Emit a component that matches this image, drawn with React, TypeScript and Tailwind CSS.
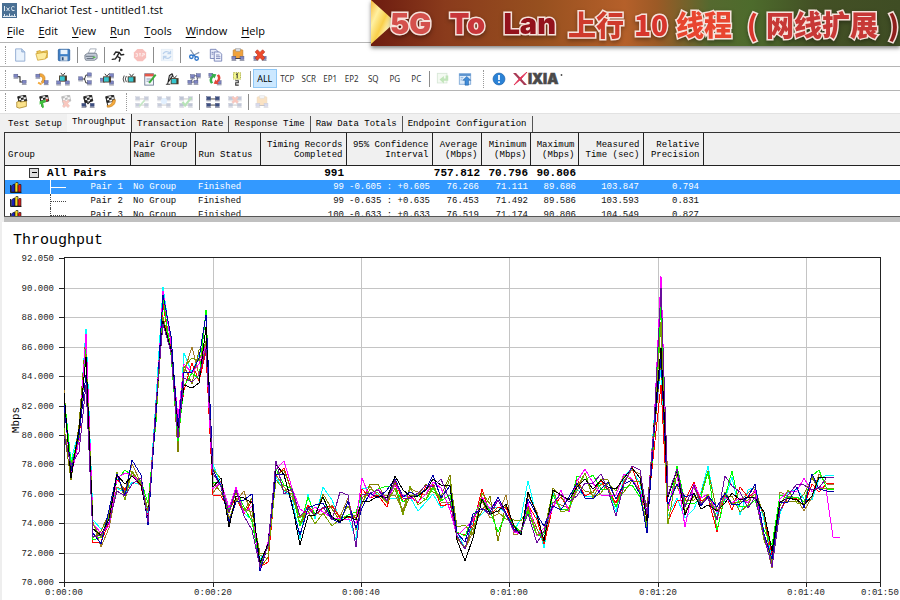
import React from "react";
import type { ReactNode } from "react";

/* ---------- icon drawing parts (16 x 16 grid) ---------- */

function Node({ x, y, dark }: { x: number; y: number; dark?: boolean }) {
  return (
    <g>
      <rect x={x} y={y} width="4.5" height="3.6" fill={dark ? "#3c4f80" : "#7f86c4"} stroke="#4c5480" strokeWidth="0.5" />
      <rect x={x - 0.4} y={y + 4} width="5.4" height="1.2" fill="#8f93a5" />
    </g>
  );
}

function Tv({ x, y }: { x: number; y: number }) {
  return (
    <g>
      <path d={`M${x + 2} ${y - 3}l2.4 3 2.4-3`} stroke="#222" fill="none" strokeWidth="1" />
      <rect x={x} y={y} width="9" height="7" fill="#4a3a28" />
      <rect x={x + 1} y={y + 1} width="5.5" height="5" fill="#37c6cf" />
    </g>
  );
}

function Flag() {
  return (
    <g transform="rotate(-12 8 5)">
      <rect x="4" y="1" width="9" height="7" fill="#f5f5f5" stroke="#222" strokeWidth="0.8" />
      <path d="M4 1h3v2.3H4zM10 1h3v2.3h-3zM7 3.3h3v2.3H7zM4 5.6h3V8H4zM10 5.6h3V8h-3z" fill="#222" />
      <path d="M4 1v12" stroke="#222" strokeWidth="1" />
    </g>
  );
}

const fourNodes = (
  <g>
    <path d="M4 4.5h8M4 11.5h8" stroke="#333" />
    <Node x={0.8} y={2} dark />
    <Node x={10.7} y={2} dark />
    <Node x={0.8} y={9.5} dark />
    <Node x={10.7} y={9.5} dark />
  </g>
);

const redCross = <path d="M2.5 4.5L5 2l3 3 3-3 2.500 2.500-3 3.300 3 3.400L11 14l-3-3-3 3-2.500-2.500 3-3.500z" fill="#ef4a2c" stroke="#a92a18" strokeWidth="0.7" />;

const clipboard = (
  <g>
    <rect x="2.500" y="2" width="11" height="10" rx="1" fill="#f0a23c" stroke="#b87520" strokeWidth="0.7" />
    <rect x="5.500" y="0.800" width="5" height="3" fill="#d9dce2" stroke="#888" strokeWidth="0.5" />
    <Node x={1} y={9.5} />
    <Node x={10.3} y={9.5} />
    <path d="M5 12h6" stroke="#334" />
  </g>
);

const icons: Record<string, ReactNode> = {
  "New": (
    <g>
      <path d="M3 1h7l3.500 3.500V15H3z" fill="#eaf3fd" stroke="#8ba7cf" />
      <path d="M10 1v3.500h3.500" fill="#bcd3ee" stroke="#8ba7cf" />
    </g>
  ),
  "Open": (
    <g>
      <path d="M2 4l4-1 1 1.500 7-1.500v8l-9 2z" fill="#f2d264" stroke="#c99a25" />
      <path d="M1 6.500l9-1.500 4 .5-2 7-9 1.500z" fill="#fdeb9d" stroke="#c99a25" strokeWidth="0.8" />
    </g>
  ),
  "Save": (
    <g>
      <rect x="1.500" y="1.500" width="13" height="13" rx="1" fill="#3f7fc6" stroke="#2a5f9c" />
      <rect x="4" y="2" width="8" height="5" fill="#e8f1fb" />
      <rect x="4" y="9.500" width="8" height="5" fill="#d4dce6" />
      <rect x="5.500" y="10.500" width="2" height="3.500" fill="#2a4f80" />
    </g>
  ),
  "Print": (
    <g>
      <path d="M5 6l2-5h7l-2 5z" fill="#fff" stroke="#8892a0" strokeWidth="0.8" />
      <path d="M1 8l3-2h10l1 2v4l-3 2H2l-1-2z" fill="#c3cad6" stroke="#5e6878" strokeWidth="0.8" />
      <path d="M2 9.500h10M3 12h8" stroke="#5e6878" />
      <rect x="10" y="10" width="3" height="1.500" fill="#58c04a" />
    </g>
  ),
  "Run": (
    <g fill="none" stroke="#262626" strokeWidth="1.600" strokeLinecap="round">
      <circle cx="11.800" cy="2.300" r="1.500" fill="#262626" stroke="none" />
      <path d="M9.500 5L7 9.500l3.500 2-1 3.500M7 9.500L5 12.500 1.500 13M9.500 5L5.500 4.500 3.500 7.500M9.500 5l2 3 3-.5" />
    </g>
  ),
  "Stop": (
    <g opacity="0.38">
      <path d="M5 1h6l4 4v6l-4 4H5l-4-4V5z" fill="#ee5a50" />
      <path d="M3 6.500h2v3H3M7 6.500h2M8 6.500v3M10.500 6.500h2.500v1.500h-2.500v2" stroke="#fff" fill="none" strokeWidth="0.8" />
    </g>
  ),
  "Refresh": (
    <g opacity="0.35">
      <rect x="1.500" y="1.500" width="13" height="13" fill="#d7e6f6" stroke="#b4cdea" />
      <path d="M3.500 7c1-3 5-4 8-1M12 3v3.500H8.500M12.500 9c-1 3-5 4-8 1M4 13V9.500h3.500" stroke="#3e7fca" fill="none" strokeWidth="1.500" />
    </g>
  ),
  "Cut": (
    <g fill="none">
      <path d="M8 8L4 2M8 8l6-3" stroke="#8796ad" strokeWidth="1.500" />
      <circle cx="5" cy="10" r="2" stroke="#2c74c9" strokeWidth="1.500" />
      <circle cx="11" cy="12" r="2" stroke="#2c74c9" strokeWidth="1.500" />
      <path d="M8 8l-2 1M8 8l2 2.500" stroke="#2c74c9" strokeWidth="1.500" />
    </g>
  ),
  "Copy": (
    <g stroke="#6674ad" strokeWidth="0.9">
      <path d="M1.500 1.500H8L10 4v8H1.500z" fill="#e6eaf8" />
      <path d="M6 4.500h6L14.500 7v8H6z" fill="#f0f3fd" />
      <path d="M8 8h4M8 10h5M8 12h5M3 5h2M3 7h2" />
    </g>
  ),
  "Paste": clipboard,
  "Delete": (
    <g>
      <Node x={1} y={9.5} />
      <Node x={10.5} y={9.5} />
      {redCross}
    </g>
  ),
  "Add pair": (
    <g>
      <path d="M4 5.500h4v6h4" stroke="#222" fill="none" strokeWidth="1.200" />
      <Node x={1} y={2.500} />
      <Node x={10.5} y={9.5} />
    </g>
  ),
  "Add VoIP pair": (
    <g>
      <path d="M5 2c6-1 9 6 4 11l-2-1.500C10 8 9 5 5 5z" fill="#f4a93c" stroke="#b87418" strokeWidth="0.6" />
      <Node x={1} y={2.500} />
      <Node x={10.5} y={9.8} />
      <path d="M4 11l4 2-1 2-4-2z" fill="#f4a93c" />
    </g>
  ),
  "Add video pair": (
    <g>
      <Tv x={3.500} y={4} />
      <Node x={0.8} y={10.2} />
      <Node x={10.700} y={10.2} />
    </g>
  ),
  "Add multicast group": (
    <g>
      <path d="M4 8h4M13 3.500H9L7.500 8 9 12.500h4" stroke="#222" fill="none" />
      <Node x={0.8} y={5.500} />
      <Node x={10.7} y={1} />
      <Node x={10.7} y={10} />
    </g>
  ),
  "Add video multicast": (
    <g>
      <Node x={0.5} y={7} />
      <Node x={11} y={2} />
      <Node x={11} y={10.2} />
      <Tv x={3.500} y={5} />
    </g>
  ),
  "Add IPTV": (
    <g>
      <path d="M2.500 4q-2.500 4 0 8M5 4.500q-2.500 3.500 0 7" stroke="#333" fill="none" />
      <Tv x={6.500} y={5} />
    </g>
  ),
  "Edit pair": (
    <g>
      <rect x="2" y="2" width="10" height="13" fill="#f3f6fb" stroke="#6c7a92" />
      <rect x="2" y="2" width="10" height="3" fill="#e4584a" />
      <path d="M4 8h5M4 10.500h4" stroke="#7d8dad" />
      <path d="M14.500 3L7 12.500" stroke="#3cae3b" strokeWidth="2.200" />
    </g>
  ),
  "Edit video": (
    <g>
      <path d="M3 14L5 4l3-2 1 2-5 7" stroke="#222" fill="#ccc" strokeWidth="1.200" />
      <Tv x={6.500} y={7} />
      <path d="M1 14h5" stroke="#222" />
    </g>
  ),
  "Replicate": (
    <g>
      <path d="M5 5l7-1M3 12l7-1M7 5l-2 6M13 4l-2 7" stroke="#445" />
      <Node x={4} y={3} />
      <Node x={10.7} y={2} />
      <Node x={1} y={9.5} />
      <Node x={8} y={9.5} />
    </g>
  ),
  "Swap endpoints": (
    <g>
      <Node x={1} y={1.500} />
      <Node x={10.5} y={10} />
      <path d="M3.500 13.500A6 6 0 0 1 5 4L3.500 2l6 .5-2 5-1-1.800A4 4 0 0 0 6 12z" fill="#35b24a" />
      <path d="M12.500 2.500A6 6 0 0 1 11 12l1.500 2-6-.5 2-5 1 1.800A4 4 0 0 0 10 4z" fill="#e2473b" />
    </g>
  ),
  "Renumber": (
    <g fill="none">
      <rect x="4" y="0.800" width="8" height="7.400" fill="#f4f78e" stroke="#a3a832" strokeDasharray="1.500 1" />
      <path d="M7 3l1.200-1v5M6 10h3.500v2.300H6.500V15H10" stroke="#333" strokeWidth="1.200" />
    </g>
  ),
  "Import": (
    <g opacity="0.4">
      <rect x="1.500" y="1.500" width="11" height="11" fill="#e6f3e0" stroke="#9cc49c" />
      <path d="M14 4v6H9v3L4 8.500 9 4.500v3h2V4z" fill="#66bf54" />
    </g>
  ),
  "Export": (
    <g>
      <rect x="1.500" y="2" width="13" height="12" fill="#dcebfa" stroke="#7fa9d8" />
      <rect x="1.500" y="2" width="13" height="2.500" fill="#5d94cf" />
      <path d="M3 6.500h3M3 9h2" stroke="#7fa9d8" />
      <path d="M8 15V9.500H5.500l4.500-4.500 4.500 4.500H12V15z" fill="#3f8bd8" stroke="#215e9f" strokeWidth="0.6" />
    </g>
  ),
  "About": (
    <g>
      <circle cx="8" cy="8" r="6.800" fill="#2a82d6" stroke="#1d62aa" strokeWidth="0.8" />
      <path d="M8 3.500v5.500M8 10.700v2" stroke="#fff" strokeWidth="2" />
    </g>
  ),
  "Open run": (
    <g>
      <Flag />
      <path d="M2 8l3-1 1 1 7-1v6l-8 2-3-1z" fill="#fbe28a" stroke="#a8842a" strokeWidth="0.9" />
    </g>
  ),
  "Start group": (
    <g>
      <Flag />
      <path d="M3 7l7-2v3l-3 1 1 5-2 1-1.500-5L3 11z" fill="#3fbf3c" />
      <path d="M10 4l3 1-2 3z" fill="#e04030" />
    </g>
  ),
  "Remove group": (
    <g opacity="0.3">
      <Flag />
      <g transform="translate(2 4) scale(.75)">{redCross}</g>
    </g>
  ),
  "Group endpoints": (
    <g>
      <Flag />
      <Node x={1} y={9.5} dark />
      <Node x={10.500} y={9.500} dark />
      <path d="M3 4l5 6 5-5" stroke="#222" fill="none" strokeWidth="1.300" />
    </g>
  ),
  "Group voice": (
    <g>
      <Flag />
      <path d="M14 5c1 5-3 9-9 9l-.5-2c4 0 6-2 6.500-6z" fill="#f4a93c" stroke="#b87418" strokeWidth="0.6" />
    </g>
  ),
  "Enable link": <g opacity="0.28">{fourNodes}<path d="M5 13l6-7" stroke="#3a3" strokeWidth="2" /></g>,
  "Find link": <g opacity="0.28">{fourNodes}<circle cx="8" cy="7" r="3.500" fill="#9cf" /></g>,
  "Check link": <g opacity="0.32">{fourNodes}<path d="M4 8l3 4 7-9" stroke="#2a2" strokeWidth="2.500" fill="none" /></g>,
  "Link all": fourNodes,
  "Unlink all": <g opacity="0.3">{fourNodes}<g transform="translate(2.500 0) scale(.7)">{redCross}</g></g>,
  "Paste link": <g opacity="0.3">{clipboard}</g>,
};

function ToolButton({ name, grow }: { name: string; grow?: boolean }) {
  return (
    <button type="button" aria-label={name} className={`flex h-5 items-center justify-center ${grow ? "min-w-0 flex-1" : "w-[22px] shrink-0"}`}>
      <svg viewBox="0 0 16 16" className="size-[14px]" aria-hidden="true">{icons[name]}</svg>
    </button>
  );
}

const Separator = () => <span className="mx-[2px] h-4 w-px shrink-0 bg-[#8c8c8c]" />;
const Grip = () => <span className="h-[18px] w-0 shrink-0 border-l border-dotted border-[#999]" />;

const filters = ["ALL", "TCP", "SCR", "EP1", "EP2", "SQ", "PG", "PC"];
const menus = ["File", "Edit", "View", "Run", "Tools", "Window", "Help"];
const tabs = ["Test Setup", "Throughput", "Transaction Rate", "Response Time", "Raw Data Totals", "Endpoint Configuration"];

function TitleIcon() {
  return (
    <svg viewBox="0 0 15 15" className="size-[15px]" aria-hidden="true">
      <rect width="15" height="15" fill="#4a7094" />
      <path d="M2.500 3v5M4.500 4.500l3 3.500M7.500 4.500l-3 3.500M12.500 4q-3-1.500-3 1.500t3 2" stroke="#dfe9f2" fill="none" />
      <path d="M1 13.500h13M2.500 11v2M5 12v1M7.500 10.500v2.500M10 12v1M12.500 11v2" stroke="#dfe9f2" />
    </svg>
  );
}

function IxiaLogo() {
  return (
    <svg viewBox="0 0 50 14" className="ml-[3px] h-[14px] w-[50px]" role="img" aria-label="IXIA">
      <path d="M0 1h3l11 12h-3z" fill="#a83a55" />
      <path d="M14 0L8 7 1 13l6-7z" fill="#e2365a" stroke="#e2365a" />
      <text x="15" y="12" fontFamily="Inter, sans-serif" fontWeight="900" fontSize="14" fill="#4a4a4a" stroke="#4a4a4a" strokeWidth="0.6">IXIA</text>
      <circle cx="48.500" cy="3" r="0.900" fill="#4a4a4a" />
    </svg>
  );
}

function Banner() {
  return (
    <div className="absolute top-0 right-0 flex h-[46px] w-[529px] items-center overflow-hidden bg-[linear-gradient(90deg,#6d1c10_0%,#8a3b1c_14%,#97501f_32%,#b5602a_48%,#9c5a26_54%,#55692f_64%,#4d6b2c_72%,#435025_84%,#3f4d24_100%)] pt-[2px] pl-[19px] shadow-[0_2px_4px_rgba(0,0,0,0.5)]">
      <svg viewBox="0 0 20 46" className="absolute top-0 left-0 h-[46px] w-5" aria-hidden="true">
        <defs>
          <linearGradient id="gold" x1="0" y1="0" x2="1" y2="1">
            <stop offset="0" stopColor="#f8b93a" />
            <stop offset="0.300" stopColor="#fff0a0" />
            <stop offset="0.550" stopColor="#f9cf4a" />
            <stop offset="0.750" stopColor="#fff3b8" />
            <stop offset="1" stopColor="#eda52c" />
          </linearGradient>
        </defs>
        <path d="M0 0l20 18v8L0 44z" fill="url(#gold)" />
      </svg>
      <p className="relative flex items-center font-['Noto_Sans_CJK_SC',sans-serif] text-[28px] leading-[44px] font-black whitespace-nowrap text-[#d8352c] drop-shadow-[0_2px_2px_rgba(0,0,0,0.35)] [-webkit-text-stroke:3px_#f6e2dc] [paint-order:stroke_fill]">
        <span className="flex w-[178px] justify-between pr-3 font-['Inter',sans-serif] text-[29px]">
          <span className="text-[#d4504c]">5G</span>
          <span className="text-[#c8363a]">To</span>
          <span className="text-[#93121c]">Lan</span>
        </span>
        <span className="w-[66px] text-[#cf3a2c]">上行</span>
        <span className="w-[42px]">10</span>
        <span className="w-[61px] text-[#e8452f]">线程</span>
        <span className="w-[21px] text-right">(</span>
        <span className="ml-2 w-[122px] text-[#c73836]">网线扩展</span>
        <span className="text-[#8f1f1c]">)</span>
      </p>
    </div>
  );
}

/* ---------- results table ---------- */

const columns = [
  { label: ["Group"], width: "w-[125px]", left: true },
  { label: ["Pair Group", "Name"], width: "w-[65px]", left: true },
  { label: ["Run Status"], width: "w-[65px]", left: true },
  { label: ["Timing Records", "Completed"], width: "w-[86px]" },
  { label: ["95% Confidence", "Interval"], width: "w-[86px]" },
  { label: ["Average", "(Mbps)"], width: "w-[49px]" },
  { label: ["Minimum", "(Mbps)"], width: "w-[49px]" },
  { label: ["Maximum", "(Mbps)"], width: "w-[48px]" },
  { label: ["Measured", "Time (sec)"], width: "w-[65px]" },
  { label: ["Relative", "Precision"], width: "w-[60px]" },
];

const pairs = [
  ["Pair 1", "No Group", "Finished", "99", "-0.605 : +0.605", "76.266", "71.111", "89.686", "103.847", "0.794"],
  ["Pair 2", "No Group", "Finished", "99", "-0.635 : +0.635", "76.453", "71.492", "89.586", "103.593", "0.831"],
  ["Pair 3", "No Group", "Finished", "100", "-0.633 : +0.633", "76.519", "71.174", "90.806", "104.549", "0.827"],
];

function PairIcon() {
  return (
    <svg viewBox="0 0 12 11" className="h-[11px] w-3" aria-hidden="true">
      <path d="M.5 3v7.500h11" stroke="#222" fill="none" />
      <path d="M1.500 4l1.500-1.500h2V10H1.500z" fill="#1c22b8" stroke="#111" strokeWidth="0.6" />
      <path d="M5 1.500L6 .5h2V10H5z" fill="#f6d91e" stroke="#111" strokeWidth="0.6" />
      <path d="M8 3.500l1-1h2V10H8z" fill="#d81e1e" stroke="#111" strokeWidth="0.6" />
    </svg>
  );
}

function ResultsTable() {
  return (
    <div className="ml-1 h-[84px] overflow-hidden border-t border-l border-[#333] bg-white">
      <table className="w-full table-fixed border-collapse text-[9px] leading-[10px] whitespace-nowrap">
        <colgroup>
          {columns.map((c) => <col key={c.label[0]} className={c.width} />)}
          <col />
        </colgroup>
        <thead>
          <tr className="h-8 bg-[#f0f0f0]">
            {columns.map((c) => (
              <th key={c.label[0]} scope="col" className={`border-r border-b border-[#222] px-[3px] pb-[5px] align-bottom font-normal ${c.left ? "text-left" : "text-right"}`}>
                {c.label.map((line) => <span key={line} className="block">{line}</span>)}
              </th>
            ))}
            <td className="border-b border-[#222]" />
          </tr>
        </thead>
        <tbody>
          <tr className="h-[15px] text-[11px] font-bold">
            <td>
              <div className="flex items-center pl-6">
                <button type="button" aria-label="Collapse all pairs" className="mr-2 flex size-[10px] items-center justify-center border border-[#333] bg-[#ddd]">
                  <span className="h-px w-[5px] bg-black" />
                </button>
                All Pairs
              </div>
            </td>
            <td /><td />
            <td className="pr-[2px] text-right">991</td>
            <td />
            <td className="pr-px text-right">757.812</td>
            <td className="pr-[2px] text-right">70.796</td>
            <td className="pr-[2px] text-right">90.806</td>
            <td /><td /><td />
          </tr>
          {pairs.map((row, i) => (
            <tr key={row[0]} className={i === 0 ? "h-[14px] bg-[#3399ff] text-white" : "h-[14px] text-[#111]"}>
              {row.map((cell, j) => (
                <td key={j} className={j === 0 ? "pr-[7px]" : j < 3 ? "pl-[3px]" : j < 8 ? "pr-[2px] text-right" : "pr-[4px] text-right"}>
                  {j === 0 ? (
                    <div className="flex h-[14px] items-center pl-[5px]">
                      <PairIcon />
                      <span className={`ml-7 h-[14px] border-l ${i === 0 ? "border-white" : "border-dotted border-[#444]"}`} />
                      <span className={`h-0 w-[15px] border-t ${i === 0 ? "border-white" : "border-dotted border-[#444]"}`} />
                      <span className="ml-auto">{cell}</span>
                    </div>
                  ) : cell}
                </td>
              ))}
              <td />
            </tr>
          ))}
        </tbody>
      </table>
    </div>
  );
}

/* ---------- chart ---------- */

const seriesColors = ["#000000", "#ff0000", "#00ff00", "#0000a8", "#ff00ff", "#00ffff", "#808000", "#6a0d9c", "#a07c28", "#78a000"];
const drawOrder = [5, 8, 1, 6, 2, 4, 9, 3, 0, 7];

// x, highest, typical and lowest line, then the series that sit highest and lowest
const samples: number[][] = [
  [64, 390, 412, 435, 8, 7], [71, 461, 472, 480, 5, 6], [79, 425, 440, 452, 6, 7], [86, 329, 354, 385, 5, 7],
  [93, 520, 531, 543, 5, 1], [101, 529, 536, 547, 5, 8], [109, 510, 517, 528, 3, 8], [117, 472, 479, 491, 9, 7],
  [125, 470, 490, 500, 2, 9], [132, 460, 475, 484, 3, 7], [141, 475, 482, 486, 3, 1], [148, 503, 515, 525, 2, 3],
  [156, 400, 410, 422, 5, 2], [163, 287, 307, 324, 5, 7], [171, 336, 345, 355, 3, 2], [178, 418, 436, 452, 4, 6],
  [184, 353, 372, 390, 5, 1], [192, 347, 375, 388, 8, 0], [199, 350, 370, 383, 6, 0], [206, 310, 334, 352, 2, 1],
  [213, 464, 481, 495, 5, 1], [221, 478, 483, 496, 0, 1], [229, 508, 518, 527, 4, 0], [236, 487, 497, 502, 4, 3],
  [244, 491, 510, 516, 8, 7], [252, 494, 507, 530, 3, 7], [260, 553, 563, 571, 9, 3], [268, 542, 552, 562, 4, 1],
  [276, 461, 468, 480, 7, 9], [284, 461, 477, 494, 4, 7], [292, 488, 494, 506, 4, 3], [300, 509, 521, 545, 4, 0],
  [308, 494, 508, 516, 5, 0], [315, 505, 517, 524, 3, 9], [323, 487, 507, 515, 5, 8], [332, 500, 516, 526, 5, 9],
  [340, 492, 516, 523, 7, 3], [348, 495, 510, 519, 7, 4], [356, 512, 520, 547, 2, 7], [362, 478, 496, 508, 4, 3],
  [370, 484, 495, 501, 6, 0], [378, 484, 490, 498, 6, 3], [387, 486, 499, 507, 2, 1], [395, 476, 489, 499, 0, 5],
  [403, 490, 502, 515, 0, 9], [410, 486, 493, 499, 9, 7], [418, 492, 498, 511, 8, 5], [426, 484, 490, 502, 6, 5],
  [433, 475, 486, 494, 3, 5], [441, 479, 496, 508, 7, 5], [450, 475, 491, 510, 6, 4], [457, 527, 533, 540, 9, 0],
  [465, 525, 538, 561, 9, 0], [473, 514, 525, 538, 3, 0], [482, 489, 501, 514, 1, 5], [490, 496, 508, 518, 6, 8],
  [498, 497, 512, 541, 3, 6], [506, 495, 512, 519, 8, 9], [514, 520, 529, 535, 9, 8], [521, 518, 530, 535, 5, 0],
  [528, 481, 505, 514, 5, 7], [537, 512, 524, 543, 8, 7], [544, 526, 534, 548, 3, 5], [553, 488, 499, 508, 6, 4],
  [561, 490, 507, 512, 4, 9], [569, 497, 507, 512, 3, 4], [577, 476, 485, 496, 2, 7], [585, 469, 486, 498, 4, 3],
  [593, 475, 492, 499, 2, 3], [601, 474, 483, 495, 7, 4], [608, 480, 489, 495, 6, 4], [616, 489, 504, 516, 0, 7],
  [624, 474, 484, 492, 4, 6], [632, 466, 474, 485, 7, 2], [640, 470, 487, 497, 7, 2], [647, 507, 519, 533, 6, 3],
  [654, 420, 432, 450, 5, 1], [661, 276, 330, 385, 4, 1], [668, 487, 508, 524, 8, 9], [677, 466, 485, 501, 2, 1],
  [685, 497, 507, 527, 3, 4], [694, 482, 495, 509, 1, 5], [701, 492, 503, 509, 5, 0], [708, 466, 494, 505, 5, 0],
  [717, 507, 520, 532, 3, 1], [725, 476, 491, 503, 7, 0], [732, 471, 494, 510, 2, 1], [740, 487, 504, 515, 1, 5],
  [748, 490, 498, 508, 5, 7], [755, 484, 491, 500, 3, 2], [764, 512, 522, 540, 0, 9], [772, 545, 561, 568, 2, 8],
  [780, 492, 501, 514, 8, 5], [788, 490, 496, 502, 9, 3], [797, 484, 498, 503, 7, 9], [804, 478, 500, 511, 4, 8],
  [812, 474, 487, 500, 3, 5], [819, 470, 488, 492, 2, 1], [827, 475, 484, 491, 5, 3], [834, 475, 484, 491, 5, 3],
];

function lineFor(series: number): string {
  const last = samples.length - 1;
  return samples
    .map(([x, high, mid, low, highest, lowest], i) => {
      if (series === 4 && i >= last - 1) return i === last ? "833,537 840,537" : "826,489";
      const step = i === last ? i - 1 : i;
      const noise = Math.sin(step * 12.9898 + series * 78.233) * 43758.5453;
      const r = (noise - Math.floor(noise)) * 2 - 1;
      if (series === highest) return `${x},${high}`;
      if (series === lowest) return `${x},${low}`;
      const y = r < 0 ? mid + r * (mid - high) * 0.85 : mid + r * (low - mid) * 0.85;
      return `${x},${Math.round(y)}`;
    })
    .join(" ");
}

const yTicks = [92.05, 90, 88, 86, 84, 82, 80, 78, 76, 74, 72, 70];
const xTicks = [
  { x: 64, label: "0:00:00" }, { x: 213, label: "0:00:20" }, { x: 361, label: "0:00:40" }, { x: 509, label: "0:01:00" },
  { x: 658, label: "0:01:20" }, { x: 806, label: "0:01:40" }, { x: 880, label: "0:01:50" },
];
const yFor = (v: number) => Math.round(582 - (v - 70) * 14.7);

function ThroughputChart() {
  return (
    <svg viewBox="0 251 900 349" className="block w-full font-['Liberation_Mono',monospace] text-[9px]" role="img" aria-label="Throughput in Mbps over elapsed time">
      <g stroke="#c4c4c4" shapeRendering="crispEdges">
        {yTicks.slice(1, -1).map((v) => <path key={v} d={`M65 ${yFor(v) + 0.5}H880`} />)}
        {xTicks.slice(1, -1).map((t) => <path key={t.x} d={`M${t.x + 0.5} 258V582`} />)}
      </g>
      <g stroke="#222" fill="none" shapeRendering="crispEdges">
        {yTicks.map((v) => <path key={v} d={`M59 ${yFor(v) + 0.5}H65`} />)}
        {xTicks.map((t) => <path key={t.x} d={`M${t.x + 0.5} 582v5`} />)}
        <rect x="64.500" y="257.500" width="816" height="325" />
      </g>
      <g fill="none" strokeWidth="1" shapeRendering="crispEdges">
        {drawOrder.map((i) => <polyline key={i} points={lineFor(i)} stroke={seriesColors[i]} />)}
      </g>
      <g fill="#222">
        {yTicks.map((v) => <text key={v} x="54" y={yFor(v) + 3} textAnchor="end">{v.toFixed(3)}</text>)}
        {xTicks.map((t) => <text key={t.x} x={t.x} y="595" textAnchor="middle">{t.label}</text>)}
        <text transform="translate(19 420) rotate(-90)" textAnchor="middle" className="text-[11px]" fill="#000">Mbps</text>
      </g>
    </svg>
  );
}

export default function App() {
  return (
    <div className="relative min-h-screen w-full overflow-hidden bg-white font-['Liberation_Mono',monospace] text-black">
      <header className="font-['Open_Sans','Noto_Sans',sans-serif]">
        <div className="flex h-5 items-center gap-1 pl-[2px] text-[11px]">
          <TitleIcon />
          <h1>IxChariot Test - untitled1.tst</h1>
        </div>
        <nav className="flex h-[23px] items-center gap-[14px] border-b border-[#b5b5b5] pl-[7px] text-[11px]">
          {menus.map((m) => (
            <button key={m} type="button"><span className="underline underline-offset-2">{m[0]}</span>{m.slice(1)}</button>
          ))}
        </nav>
      </header>
      <Banner />

      <div role="toolbar" aria-label="Standard" className="flex h-6 items-center border-b border-[#b5b5b5] pl-[5px]">
        <Grip />
        <div className="ml-[3px] flex items-center">
          {["New", "Open", "Save"].map((n) => <ToolButton key={n} name={n} />)}
          <Separator />
          <ToolButton name="Print" />
          <Separator />
          <ToolButton name="Run" />
          <ToolButton name="Stop" />
          <Separator />
          <ToolButton name="Refresh" />
          <Separator />
          {["Cut", "Copy", "Paste", "Delete"].map((n) => <ToolButton key={n} name={n} />)}
        </div>
      </div>

      <div role="toolbar" aria-label="Pairs" className="flex h-6 items-center border-b border-[#b5b5b5] pl-[5px]">
        <Grip />
        <div className="ml-[3px] flex w-[239px] items-center">
          {["Add pair", "Add VoIP pair", "Add video pair", "Add multicast group", "Add video multicast", "Add IPTV", "Edit pair", "Edit video", "Replicate", "Swap endpoints", "Renumber"].map((n) => <ToolButton key={n} name={n} grow />)}
        </div>
        <Separator />
        <div className="flex w-[174px] items-center font-['Noto_Sans',sans-serif] text-[8px] text-[#333]">
          {filters.map((f, i) => (
            <button key={f} type="button" className={`flex h-[19px] min-w-0 flex-1 items-center justify-center ${i === 0 ? "border border-[#90c8f6] bg-[#cce8ff] text-[9px] text-black" : ""}`}>{f}</button>
          ))}
        </div>
        <Separator />
        <ToolButton name="Import" />
        <ToolButton name="Export" />
        <span className="ml-[7px] flex items-center">
          <Grip />
          <span className="ml-1 flex items-center">
            <ToolButton name="About" />
            <IxiaLogo />
          </span>
        </span>
      </div>

      <div role="toolbar" aria-label="Groups" className="flex h-[22px] items-center pl-[5px]">
        <Grip />
        <div className="ml-[5px] flex w-[110px] items-center">
          {["Open run", "Start group", "Remove group", "Group endpoints", "Group voice"].map((n) => <ToolButton key={n} name={n} grow />)}
        </div>
        <span className="ml-[5px] flex items-center">
          <Grip />
          <span className="ml-1 flex items-center">
            {["Enable link", "Find link", "Check link"].map((n) => <ToolButton key={n} name={n} />)}
            <Separator />
            {["Link all", "Unlink all"].map((n) => <ToolButton key={n} name={n} />)}
            <Separator />
            <ToolButton name="Paste link" />
          </span>
        </span>
      </div>

      <section className="border-t border-[#e2e2e2] bg-[#f0f0f0]">
        <div role="tablist" className="flex h-[18px] items-end pl-1 text-[9px] leading-[14px]">
          {tabs.map((t, i) => (
            <button key={t} type="button" role="tab" aria-selected={i === 1} className={`whitespace-nowrap ${i === 1 ? "h-[18px] border-r border-[#333] bg-[#f7f7f7] px-[5px] pb-[3px]" : i === 0 ? "h-4 pr-[5px] pl-1" : "h-4 border-r border-[#555] px-[5px]"}`}>{t}</button>
          ))}
        </div>
        <ResultsTable />
        <div className="ml-1 h-[6px] border-t border-[#555] bg-[#c0c0c0]" />
      </section>

      <main className="border-l-2 border-[#eeeeee]">
        <h2 className="pt-[9px] pl-[11px] text-[15px] leading-5">Throughput</h2>
        <div className="-ml-[2px]"><ThroughputChart /></div>
      </main>
    </div>
  );
}
